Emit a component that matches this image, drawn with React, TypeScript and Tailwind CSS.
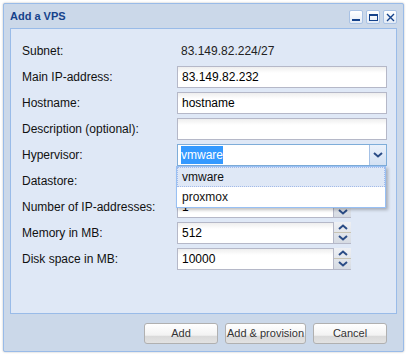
import React from 'react'

const font = "font-['Liberation_Sans',Arial,sans-serif]"

// Small field box used by text inputs
function Field({ value, className = '' }: { value?: string; className?: string }) {
  return (
    <div
      className={`h-[22px] border border-[#b5b8c8] bg-[linear-gradient(#eeeeee,#ffffff_6px)] px-[4px] flex items-center text-[12px] text-black ${className}`}
    >
      {value}
    </div>
  )
}

function Chevron({ up = false }: { up?: boolean }) {
  return (
    <svg width="10" height="6" viewBox="0 0 10 6">
      <polyline
        points={up ? '1,5 5,1.5 9,5' : '1,1 5,4.5 9,1'}
        fill="none"
        stroke="#2a4c86"
        strokeWidth="2"
      />
    </svg>
  )
}

// Number field with spinner on the right
function NumberField({ value }: { value: string }) {
  return (
    <div className="flex w-[174px] h-[22px]">
      <Field value={value} className="w-[157px]" />
      <div className="w-[17px] h-[22px] flex flex-col border-b border-[#b5b8c8] bg-[linear-gradient(#eef0f4,#d6dbe3)]">
        <div className="flex-1 flex items-center justify-center border-b border-[#c7c3b4]">
          <Chevron up />
        </div>
        <div className="flex-1 flex items-center justify-center">
          <Chevron />
        </div>
      </div>
    </div>
  )
}

function Row({ label, children }: { label: string; children: React.ReactNode }) {
  return (
    <div className="flex items-center h-[22px]">
      <div className="w-[155px] text-[12px] text-[#111]">{label}</div>
      {children}
    </div>
  )
}

function ToolButton({ children }: { children: React.ReactNode }) {
  return (
    <div className="w-[14px] h-[14px] rounded-[2px] border border-[#a9c2e4] bg-[linear-gradient(#ffffff,#e3ebf6)] flex items-center justify-center">
      {children}
    </div>
  )
}

function Button({ label, width }: { label: string; width: string }) {
  return (
    <div
      className={`${width} h-[21px] rounded-[3px] border border-[#b0b0b0] bg-[linear-gradient(#ffffff,#f2f2f2_60%,#d9d9d9_62%,#e2e2e2)] flex items-center justify-center whitespace-nowrap text-[11px] text-[#333]`}
    >
      {label}
    </div>
  )
}

export default function App() {
  return (
    <div className={`w-[407px] h-[358px] bg-white pt-[3px] pl-[3px] ${font}`}>
      <div className="w-[401px] h-[349px] rounded-[2px] border border-[#99bbe8] bg-[#cbd8e9] shadow-[0_0_2px_rgba(0,0,0,0.3)] flex flex-col px-[6px]">
        {/* Header */}
        <div className="h-[24px] flex items-center justify-between">
          <div className="text-[11px] font-bold text-[#15428b]">Add a VPS</div>
          <div className="flex gap-[3px] mt-[2px]">
            <ToolButton>
              <div className="w-[8px] h-[2px] bg-[#15428b] mt-[5px]" />
            </ToolButton>
            <ToolButton>
              <div className="w-[9px] h-[7px] border border-[#15428b] border-t-2" />
            </ToolButton>
            <ToolButton>
              <svg width="9" height="9" viewBox="0 0 9 9">
                <path d="M1 1L8 8M8 1L1 8" stroke="#15428b" strokeWidth="1.4" />
              </svg>
            </ToolButton>
          </div>
        </div>

        {/* Body */}
        <div className="relative h-[286px] border border-[#99bbe8] bg-[#dfe8f6] pl-[11px] pt-[11px] flex flex-col gap-[4px]">
          <Row label="Subnet:">
            <div className="pl-[4px] text-[12px] text-[#222]">83.149.82.224/27</div>
          </Row>
          <Row label="Main IP-address:">
            <Field value="83.149.82.232" className="w-[210px]" />
          </Row>
          <Row label="Hostname:">
            <Field value="hostname" className="w-[210px]" />
          </Row>
          <Row label="Description (optional):">
            <Field className="w-[210px]" />
          </Row>
          <Row label="Hypervisor:">
            <div className="flex w-[210px] h-[22px] border border-[#7eadd9] bg-white">
              <div className="flex-1 flex items-center px-[3px] text-[12px]">
                <span className="bg-[#3399ff] text-white">vmware</span>
              </div>
              <div className="w-[17px] border-l border-[#a4c1e6] bg-[linear-gradient(#eaf1fb,#d3e1f3)] flex items-center justify-center">
                <Chevron />
              </div>
            </div>
          </Row>
          <Row label="Datastore:">
            <div />
          </Row>
          <Row label="Number of IP-addresses:">
            <NumberField value="1" />
          </Row>
          <Row label="Memory in MB:">
            <NumberField value="512" />
          </Row>
          <Row label="Disk space in MB:">
            <NumberField value="10000" />
          </Row>

          {/* Open combo list */}
          <div className="absolute left-[165px] top-[137px] w-[210px] border border-[#98c0f4] bg-white shadow-[2px_2px_3px_rgba(0,0,0,0.25)] text-[12px] text-[#111]">
            <div className="h-[20px] flex items-center px-[4px] bg-[#dfe8f6] border border-dotted border-[#a3bae9]">
              vmware
            </div>
            <div className="h-[20px] flex items-center px-[5px]">proxmox</div>
          </div>
        </div>

        {/* Footer */}
        <div className="flex-1 flex items-center justify-end gap-[7px] pr-[10px] pt-[1px]">
          <Button label="Add" width="w-[74px]" />
          <Button label="Add & provision" width="w-[81px]" />
          <Button label="Cancel" width="w-[74px]" />
        </div>
      </div>
    </div>
  )
}
